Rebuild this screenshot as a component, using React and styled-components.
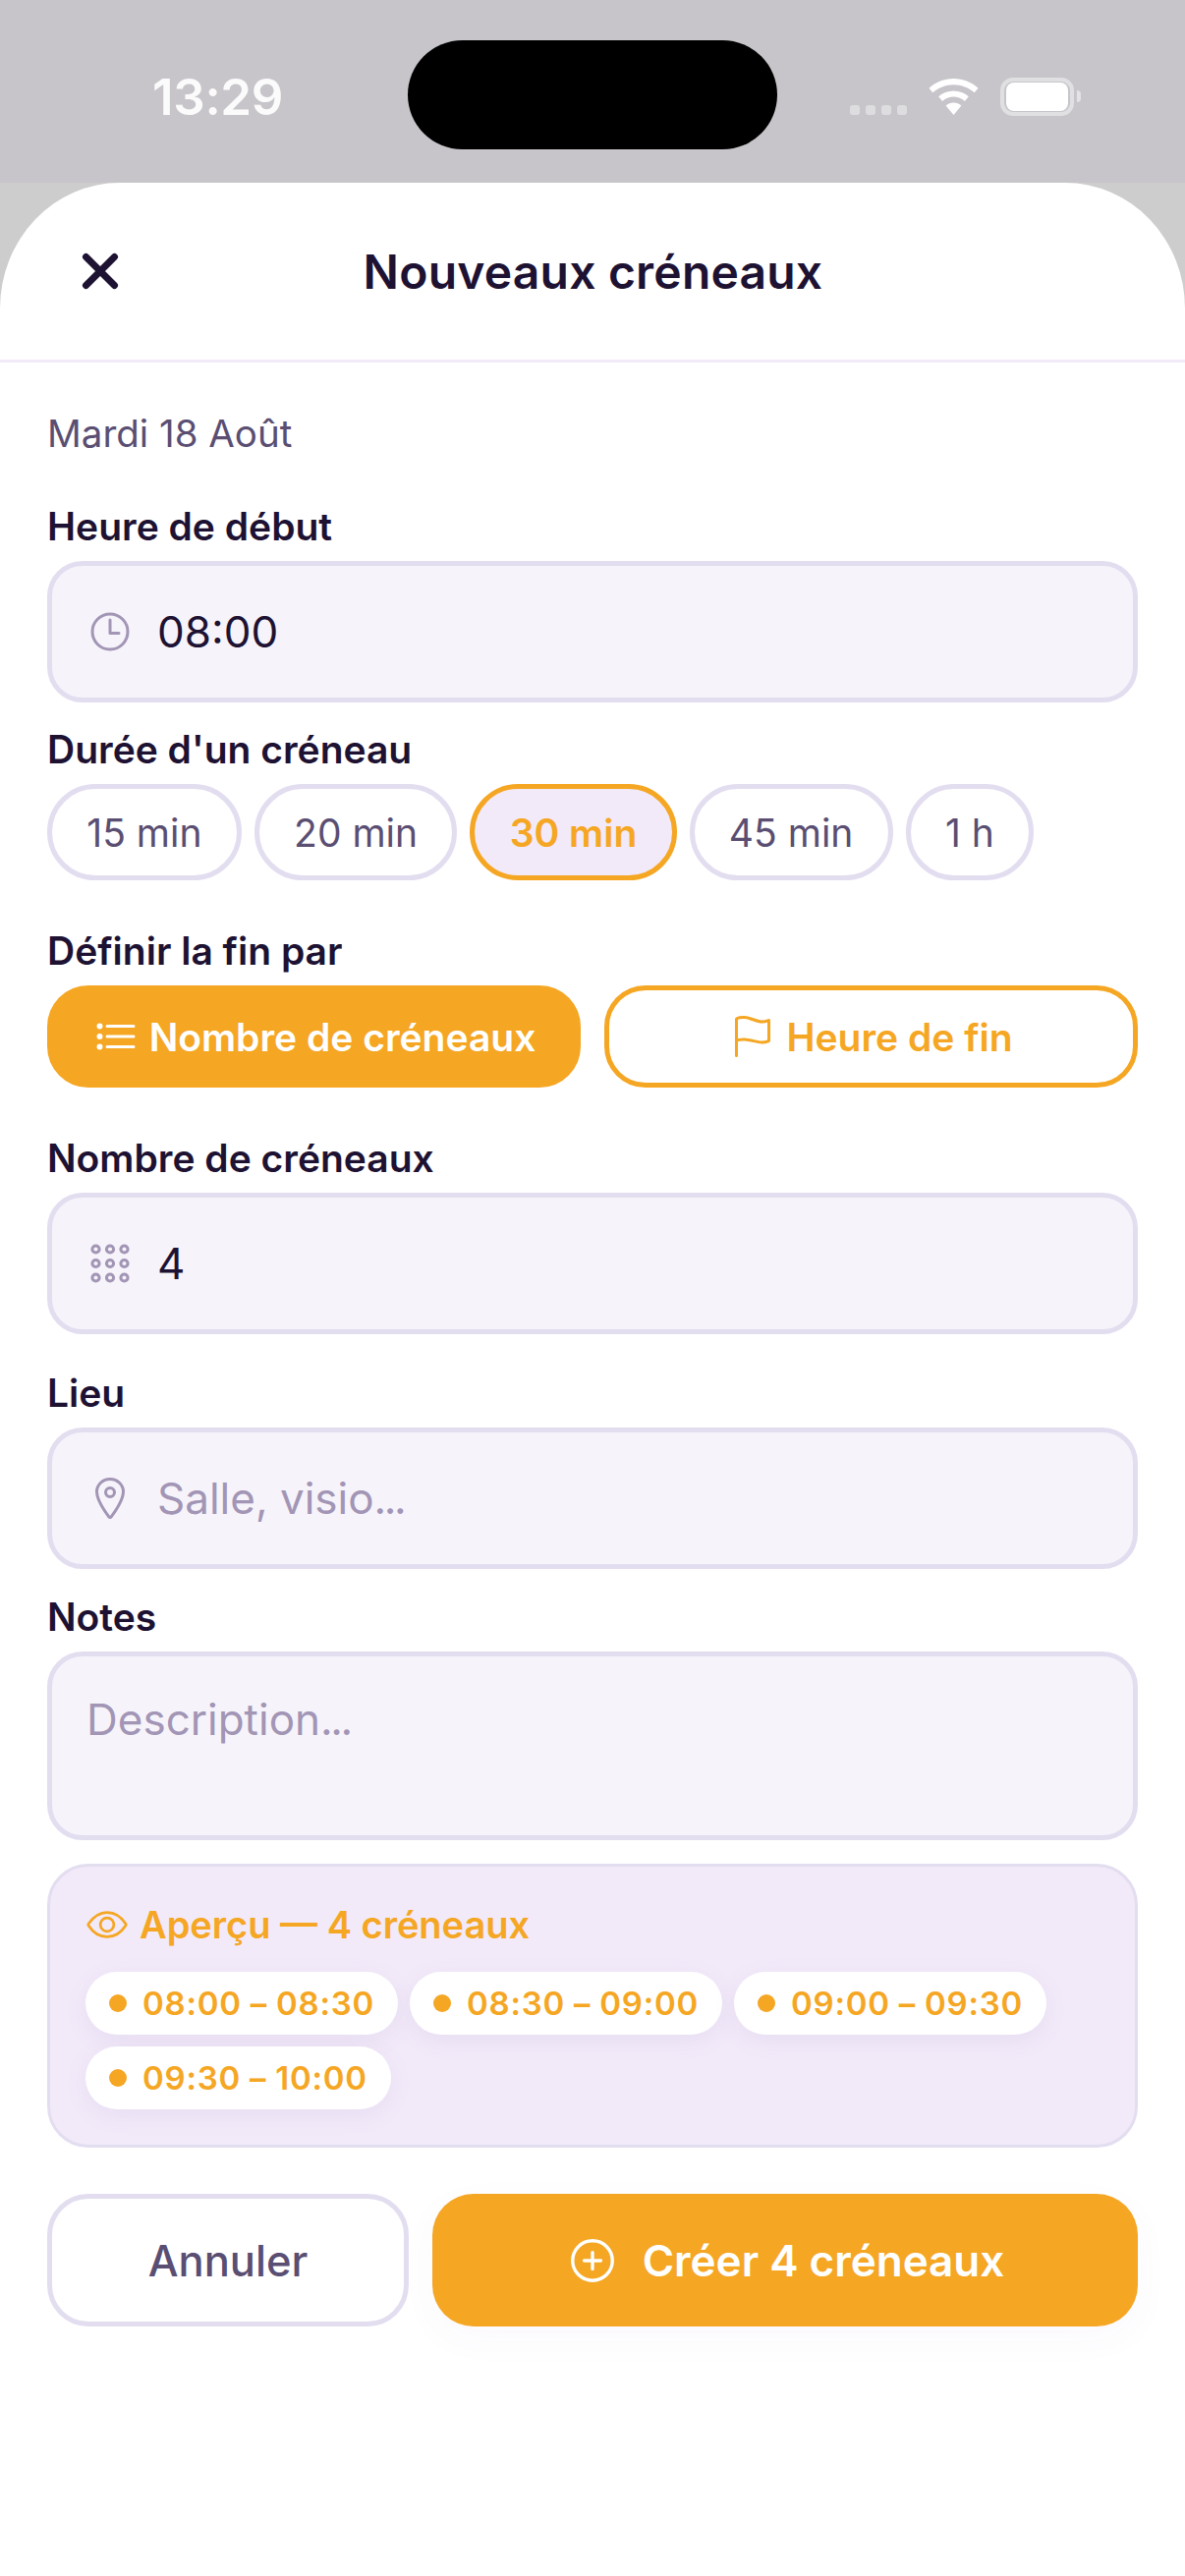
import React from "react";
import styled, { createGlobalStyle } from "styled-components";
import {
  IoTimeOutline,
  IoListOutline,
  IoFlagOutline,
  IoLocationOutline,
  IoEyeOutline,
  IoAddCircleOutline,
} from "react-icons/io5";

const ORANGE = "#F5A623";
const INK = "#1E1233";
const MUTED = "#5A4E72";
const LINE = "#E3DDF0";
const HINT = "#A295B5";

const durations = ["15 min", "20 min", "30 min", "45 min", "1 h"];
const slots = ["08:00 – 08:30", "08:30 – 09:00", "09:00 – 09:30", "09:30 – 10:00"];

const CloseIcon = () => (
  <svg width="38" height="38" viewBox="0 0 38 38" fill="none" stroke={INK} strokeWidth="7" strokeLinecap="round">
    <path d="M4.500 4.500l29 29M33.500 4.500l-29 29" />
  </svg>
);

// three by three ring keypad
const KeypadIcon = () => (
  <svg width="48" height="48" viewBox="0 0 48 48" fill="none" stroke={HINT} strokeWidth="3">
    {[9.500, 24, 38.500].map((y) =>
      [9.500, 24, 38.500].map((x) => <circle key={x + "-" + y} cx={x} cy={y} r="3.600" />)
    )}
  </svg>
);

const App = () => {
  return <Screen>
    <GlobalStyle />
    <StatusBar>
      <Time>13:29</Time>
      <Island />
      <StatusIcons>
        <Signal><i /><i /><i /><i /></Signal>
        <svg width="51" height="37" viewBox="0 0 51 37" fill="#fff">
          <path d="M25.500 0C16 0 7.300 3.600 0.500 9.700l3.800 4.600C10 9.200 17.400 6.200 25.500 6.200s15.500 3 21.200 8.100l3.800-4.600C43.700 3.600 35 0 25.500 0z" />
          <path d="M25.500 12.400c-5.800 0-11.200 2.100-15.300 5.800l3.900 4.700c3-2.800 7-4.400 11.400-4.400s8.400 1.600 11.400 4.400l3.900-4.700c-4.100-3.700-9.500-5.800-15.300-5.800z" />
          <path d="M25.500 24.600c-3 0-5.800 1.100-7.900 3L25.500 37l7.900-9.400c-2.100-1.900-4.900-3-7.900-3z" />
        </svg>
        <Battery><BatteryFill /></Battery>
        <BatteryCap />
      </StatusIcons>
    </StatusBar>

    <Backdrop>
      <Sheet>
        <Header>
          <CloseButton><CloseIcon /></CloseButton>
          <Title>Nouveaux créneaux</Title>
        </Header>

        <Form>
          <DateText>Mardi 18 Août</DateText>

          <Label $top={47}>Heure de début</Label>
          <Field>
            <IoTimeOutline size={48} color={HINT} />
            <Value>08:00</Value>
          </Field>

          <Label $top={24}>Durée d'un créneau</Label>
          <Chips>
            {durations.map((d) => (
              <Chip key={d} $active={d === "30 min"}>{d}</Chip>
            ))}
          </Chips>

          <Label $top={48}>Définir la fin par</Label>
          <Segments>
            <Segment $filled>
              <IoListOutline size={48} />
              Nombre de créneaux
            </Segment>
            <Segment>
              <IoFlagOutline size={48} />
              Heure de fin
            </Segment>
          </Segments>

          <Label $top={48}>Nombre de créneaux</Label>
          <Field>
            <KeypadIcon />
            <Value>4</Value>
          </Field>

          <Label $top={36}>Lieu</Label>
          <Field>
            <IoLocationOutline size={48} color={HINT} />
            <Value $hint>Salle, visio<Dots>...</Dots></Value>
          </Field>

          <Label $top={25}>Notes</Label>
          <NotesField>Description<Dots>...</Dots></NotesField>

          <Preview>
            <PreviewTitle>
              <IoEyeOutline size={44} />
              Aperçu — 4 créneaux
            </PreviewTitle>
            <SlotList>
              {slots.map((s) => (
                <Slot key={s}><Dot />{s}</Slot>
              ))}
            </SlotList>
          </Preview>

          <Actions>
            <CancelButton>Annuler</CancelButton>
            <CreateButton>
              <IoAddCircleOutline size={54} />
              Créer 4 créneaux
            </CreateButton>
          </Actions>
        </Form>
      </Sheet>
    </Backdrop>
  </Screen>;
};

export default App;


const GlobalStyle = createGlobalStyle`
  html, body {
    margin: 0;
    padding: 0;
    background: #fff;
  }
  * {
    box-sizing: border-box;
  }
`

const Screen = styled.div`
  width: 1206px;
  height: 2622px;
  overflow: hidden;
  display: flex;
  flex-direction: column;
  font-family: Inter, "Liberation Sans", sans-serif;
  color: ${INK};
`

const StatusBar = styled.div`
  height: 186px;
  flex-shrink: 0;
  background: #C7C5CA;
  display: flex;
  align-items: center;
  padding: 10px 0 0 155px;
  position: relative;
`
const Time = styled.div`
  font-size: 51px;
  font-weight: 600;
  letter-spacing: -0.3px;
  color: rgba(255, 255, 255, 0.92);
`
const Island = styled.div`
  position: absolute;
  left: 415px;
  top: 41px;
  width: 376px;
  height: 111px;
  background: #000;
  border-radius: 56px;
`
const StatusIcons = styled.div`
  margin-left: auto;
  margin-right: 106px;
  display: flex;
  align-items: center;
`
const Signal = styled.div`
  display: flex;
  gap: 6px;
  align-self: flex-end;
  margin-right: 22px;
  margin-bottom: 1px;

  i {
    width: 10px;
    height: 10px;
    border-radius: 3px;
    background: rgba(255, 255, 255, 0.4);
  }
`
const Battery = styled.div`
  margin-left: 22px;
  width: 75px;
  height: 39px;
  border: 4px solid rgba(255, 255, 255, 0.45);
  border-radius: 13px;
  padding: 1px 2px;
`
const BatteryFill = styled.div`
  height: 100%;
  background: #fff;
  border-radius: 8px;
`
const BatteryCap = styled.div`
  margin-left: 3px;
  width: 4px;
  height: 12px;
  background: rgba(255, 255, 255, 0.5);
  border-radius: 0 4px 4px 0;
`

const Backdrop = styled.div`
  flex: 1;
  background: #CDCDCD;
  display: flex;
`
const Sheet = styled.div`
  flex: 1;
  background: #fff;
  border-radius: 122px 122px 0 0 / 128px 128px 0 0;
  display: flex;
  flex-direction: column;
`
const Header = styled.div`
  height: 183px;
  flex-shrink: 0;
  border-bottom: 3px solid #F2EAF9;
  display: grid;
  grid-template-columns: 1fr auto 1fr;
  align-items: center;
  padding-left: 83px;
`
const CloseButton = styled.div`
  display: flex;
  margin-top: -1px;
`
const Title = styled.h1`
  margin: 0;
  transform: translateX(-41px);
  font-size: 48px;
  font-weight: 600;
  letter-spacing: 0.2px;
  color: ${INK};
`

const Form = styled.div`
  padding: 48px 48px 0;
  display: flex;
  flex-direction: column;
`
const DateText = styled.div`
  font-size: 38.500px;
  line-height: 48px;
  color: ${MUTED};
`
const Label = styled.div`
  margin-top: ${(p) => p.$top}px;
  margin-bottom: 11px;
  font-size: 39px;
  line-height: 48px;
  font-weight: 600;
  color: ${INK};
`
const Field = styled.div`
  height: 144px;
  background: #F6F4FA;
  border: 5px solid ${LINE};
  border-radius: 36px;
  padding: 0 35px;
  display: flex;
  align-items: center;
  gap: 24px;
`
const Value = styled.div`
  font-size: 44px;
  color: ${(p) => (p.$hint ? HINT : INK)};
`
const Dots = styled.span`
  letter-spacing: -2.500px;
`
const Chips = styled.div`
  display: flex;
  gap: 13px;
`
const Chip = styled.div`
  height: 98px;
  padding: 0 35.300px;
  border-radius: 49px;
  border: 5px solid ${(p) => (p.$active ? ORANGE : LINE)};
  background: ${(p) => (p.$active ? "#F2EAF9" : "#fff")};
  color: ${(p) => (p.$active ? ORANGE : MUTED)};
  font-size: 39px;
  font-weight: ${(p) => (p.$active ? 600 : 400)};
  display: flex;
  align-items: center;
`
const Segments = styled.div`
  display: flex;
  gap: 24px;
`
const Segment = styled.div`
  flex: 1;
  height: 104px;
  border-radius: 42px;
  border: 5px solid ${ORANGE};
  background: ${(p) => (p.$filled ? ORANGE : "#fff")};
  color: ${(p) => (p.$filled ? "#fff" : ORANGE)};
  font-size: 39px;
  font-weight: 600;
  display: flex;
  align-items: center;
  justify-content: center;
  gap: 10px;
`
const NotesField = styled.div`
  height: 192px;
  background: #F6F4FA;
  border: 5px solid ${LINE};
  border-radius: 36px;
  padding: 42px 35px;
  font-size: 44px;
  line-height: 1;
  color: ${HINT};
`
const Preview = styled.div`
  margin-top: 24px;
  height: 289px;
  background: #F2EAF9;
  border: 3px solid ${LINE};
  border-radius: 42px;
  padding: 35px 36px 0;
  display: flex;
  flex-direction: column;
  gap: 24px;
`
const PreviewTitle = styled.div`
  height: 48px;
  display: flex;
  align-items: center;
  gap: 11px;
  font-size: 38px;
  font-weight: 600;
  color: ${ORANGE};
`
const SlotList = styled.div`
  display: flex;
  flex-wrap: wrap;
  gap: 12px;
`
const Slot = styled.div`
  height: 64px;
  padding: 0 24px;
  border-radius: 32px;
  background: #fff;
  box-shadow: 0 6px 24px rgba(120, 80, 170, 0.08);
  color: ${ORANGE};
  font-size: 33px;
  font-weight: 600;
  letter-spacing: 0.75px;
  display: flex;
  align-items: center;
  gap: 16px;
`
const Dot = styled.span`
  width: 18px;
  height: 18px;
  border-radius: 50%;
  background: ${ORANGE};
`
const Actions = styled.div`
  margin-top: 47px;
  display: flex;
  gap: 24px;
`
const CancelButton = styled.div`
  width: 368px;
  height: 135px;
  border: 5px solid ${LINE};
  border-radius: 42px;
  background: #fff;
  color: ${MUTED};
  font-size: 43.500px;
  font-weight: 500;
  display: flex;
  align-items: center;
  justify-content: center;
`
const CreateButton = styled.div`
  flex: 1;
  height: 135px;
  border-radius: 42px;
  background: ${ORANGE};
  color: #fff;
  font-size: 44px;
  font-weight: 600;
  box-shadow: 0 12px 36px rgba(120, 80, 170, 0.04);
  display: flex;
  align-items: center;
  justify-content: center;
  gap: 24px;
`
